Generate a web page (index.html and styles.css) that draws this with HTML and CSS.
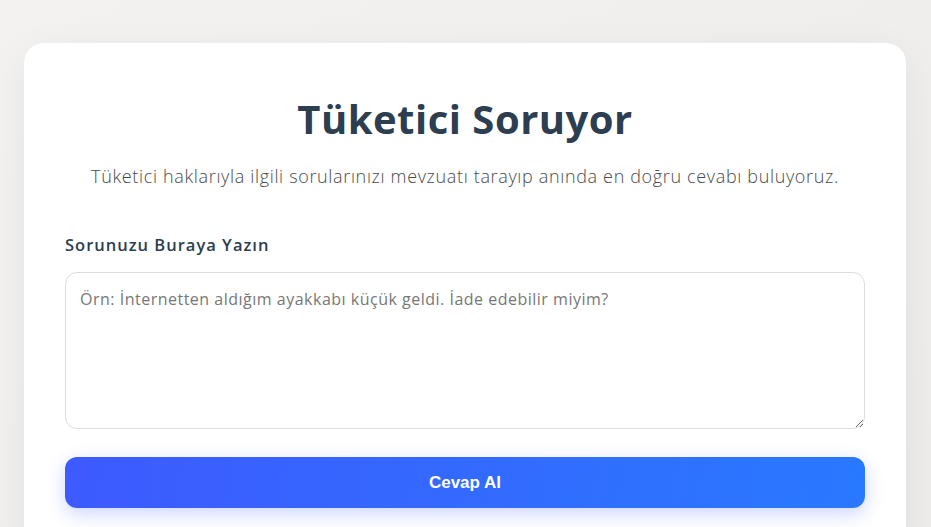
FILE: index.html
```html
<!DOCTYPE html>
<html lang="tr">
    <head>
        <meta charset="utf-8">
        <meta name="viewport" content="width=device-width, initial-scale=1">
        <title>Tüketici Soruyor</title>
        <link rel="stylesheet" href="styles.css">
    </head>
    <body>
        <div class="container">
            <h1>Tüketici Soruyor</h1>
            <p class="subtitle">Tüketici haklarıyla ilgili sorularınızı mevzuatı tarayıp anında en doğru cevabı buluyoruz.</p>

            <label for="question">Sorunuzu Buraya Yazın</label>
            <textarea id="question" name="question" placeholder="Örn: İnternetten aldığım ayakkabı küçük geldi. İade edebilir miyim?"></textarea>

            <button type="button" class="ask-btn">Cevap Al</button>
        </div>
    </body>
</html>
```

FILE: styles.css
```css
*, ::after, ::before {
    box-sizing: border-box;
}
body {
    margin: 0;
    padding: 43px 25px 0 24px;
    background: linear-gradient(135deg, #f3f2f0 0%, #eeecea 100%);
    font-family: "Open Sans", sans-serif;
    min-height: 527px;
    overflow: hidden;
}
.container {
    background: #fff;
    border-radius: 20px;
    padding: 48px 41px 40px 41px;
    box-shadow: 0 10px 40px rgba(0, 0, 0, 0.06);
}
h1 {
    margin: 0;
    text-align: center;
    font-size: 40px;
    font-weight: 700;
    line-height: 56px;
    letter-spacing: 0.5px;
    color: #2c3e50;
}
.subtitle {
    margin: 16px 0 0 0;
    text-align: center;
    font-size: 18px;
    font-weight: 300;
    line-height: 26px;
    letter-spacing: 0.65px;
    color: #4a4a4a;
}
label {
    display: block;
    margin: 44px 0 15px 0;
    font-size: 16.5px;
    font-weight: 600;
    line-height: 24px;
    letter-spacing: 1px;
    color: #2c3e50;
}
textarea {
    display: block;
    width: 100%;
    height: 157px;
    padding: 14px 14px;
    border: 1px solid #ddd;
    border-radius: 12px;
    font-family: inherit;
    font-size: 16px;
    line-height: 24px;
    letter-spacing: 0.5px;
    color: #333;
    resize: vertical;
}
textarea::placeholder {
    color: #777;
}
.ask-btn {
    display: block;
    width: 100%;
    height: 51px;
    margin-top: 28px;
    border: none;
    border-radius: 12px;
    background: linear-gradient(100deg, #3d5afe 0%, #2979ff 100%);
    box-shadow: 0 6px 18px rgba(61, 90, 254, 0.25);
    color: #fff;
    font-family: "Liberation Sans", Arial, sans-serif;
    font-size: 17px;
    font-weight: 700;
}
```
